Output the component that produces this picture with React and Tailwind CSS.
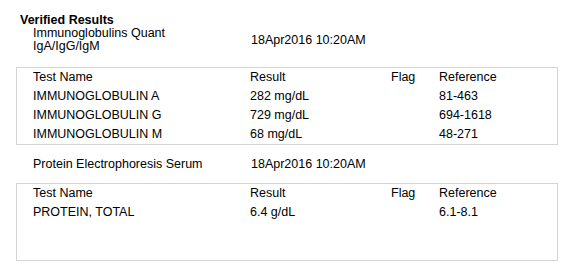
import React from "react";

const panels = [
  {
    title: ["Immunoglobulins Quant", "IgA/IgG/IgM"],
    date: "18Apr2016 10:20AM",
    rows: [
      { name: "IMMUNOGLOBULIN A", result: "282 mg/dL", flag: "", ref: "81-463" },
      { name: "IMMUNOGLOBULIN G", result: "729 mg/dL", flag: "", ref: "694-1618" },
      { name: "IMMUNOGLOBULIN M", result: "68 mg/dL", flag: "", ref: "48-271" },
    ],
  },
  {
    title: ["Protein Electrophoresis Serum"],
    date: "18Apr2016 10:20AM",
    rows: [{ name: "PROTEIN, TOTAL", result: "6.4 g/dL", flag: "", ref: "6.1-8.1" }],
  },
];

const Row = ({ cells }) => (
  <div className="grid grid-cols-[217px_141px_48px_1fr] h-[19px] items-center">
    {cells.map((c, i) => (
      <div key={i} className="leading-[19px] whitespace-nowrap">
        {c}
      </div>
    ))}
  </div>
);

const App = () => {
  return (
    <div
      className="w-[576px] h-[278px] bg-white text-black text-[12.5px] overflow-hidden"
      style={{ fontFamily: '"Liberation Sans", Arial, sans-serif' }}
    >
      <div className="pt-[13px] pl-[20px] font-bold leading-[14px]">Verified Results</div>

      {panels.map((p, idx) => (
        <div key={idx}>
          {/* order header */}
          <div
            className={`grid grid-cols-[217px_1fr] items-center pl-[33px] ${
              idx === 0 ? "mb-[14px]" : "mt-[10px] mb-[9px]"
            }`}
          >
            <div className={idx === 0 ? "leading-[13px]" : "leading-[19px]"}>
              {p.title.map((t) => (
                <div key={t}>{t}</div>
              ))}
            </div>
            <div className="pl-[1px] leading-[19px]">{p.date}</div>
          </div>

          {/* results table */}
          <div className="ml-[16px] w-[542px] h-[78px] border border-[#d4d4d4] pl-[16px]">
            <Row cells={["Test Name", "Result", "Flag", "Reference"]} />
            {p.rows.map((r) => (
              <Row key={r.name} cells={[r.name, r.result, r.flag, r.ref]} />
            ))}
          </div>
        </div>
      ))}
    </div>
  );
};

export default App;
